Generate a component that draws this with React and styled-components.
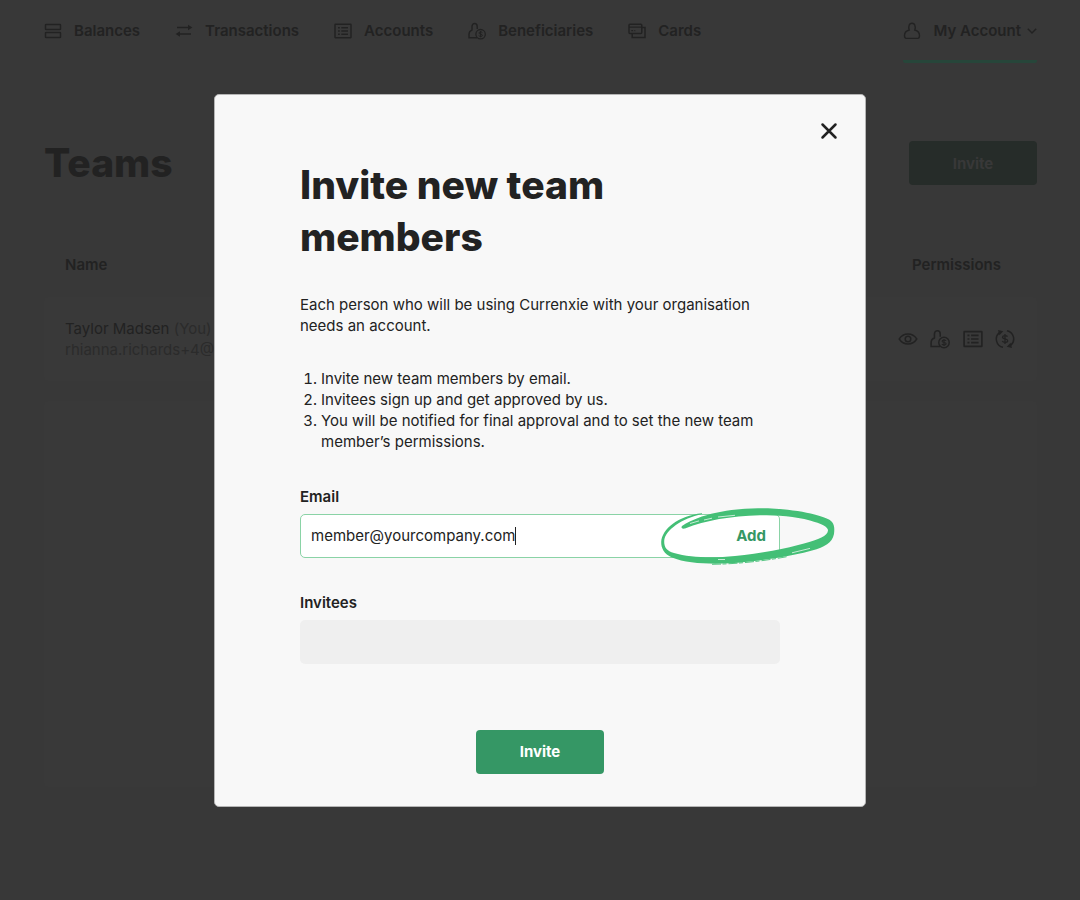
import React, { Component } from 'react'
import styled, { createGlobalStyle } from 'styled-components'

const GlobalStyle = createGlobalStyle`
  * {
    box-sizing: border-box;
  }
  body {
    margin: 0;
    background: #383838;
    color: #222;
    font-family: Inter, "Liberation Sans", sans-serif;
    font-size: 15px;
    line-height: 21px;
  }
  button, input {
    font: inherit;
    color: inherit;
  }
`
const Page = styled.div`
  min-height: 100vh;
  padding: 0 43px 0 44px;
`
const Nav = styled.nav`
  display: flex;
  justify-content: space-between;
  height: 63px;
`
const NavList = styled.div`
  display: flex;
  gap: 35px;
`
const NavLink = styled.a`
  display: flex;
  align-items: center;
  gap: ${(props) => (props.$active ? '6px' : '12px')};
  height: 63px;
  padding-top: 1px;
  border-bottom: 3px solid ${(props) => (props.$active ? '#27463a' : 'transparent')};
  border-radius: 2px;
  color: #222;
  font-weight: 600;
  text-decoration: none;
`
const AccountName = styled.span`
  margin-left: 6px;
`
const Icon = styled.svg`
  width: ${(props) => props.$size || 18}px;
  height: ${(props) => props.$size || 18}px;
  flex: none;
  fill: none;
  stroke: currentColor;
  stroke-width: 1.5;
`
const Header = styled.header`
  display: flex;
  justify-content: space-between;
  align-items: center;
  margin-top: 74px;
`
const Title = styled.h1`
  margin: 0;
  font-size: 39px;
  font-weight: 800;
  line-height: 52px;
`
const Button = styled.button`
  width: 128px;
  height: 44px;
  border: 0;
  border-radius: 4px;
  background: ${(props) => (props.$dimmed ? '#262c29' : '#359765')};
  color: ${(props) => (props.$dimmed ? '#383838' : '#fff')};
  font-weight: 700;
  cursor: pointer;
`
const Table = styled.table`
  width: 100%;
  margin-top: 65px;
  border-spacing: 0;
`
const Th = styled.th`
  padding: 0 22px 22px 21px;
  font-weight: 600;
  text-align: ${(props) => props.$align || 'left'};
`
const Td = styled.td`
  height: 84px;
  padding: 0 22px 0 21px;
  background: #393939;
  &:first-child {
    border-radius: 4px 0 0 4px;
  }
  &:last-child {
    width: 160px;
    border-radius: 0 4px 4px 0;
  }
`
const Muted = styled.span`
  color: #2b2b2b;
`
const Permissions = styled.div`
  display: flex;
  justify-content: space-between;
`
const Panel = styled.section`
  height: 386px;
  margin-top: 20px;
  border-radius: 4px;
  background: #393939;
`
const Overlay = styled.div`
  position: fixed;
  inset: 0;
  display: flex;
  align-items: center;
  justify-content: center;
`
const Modal = styled.div`
  position: relative;
  width: 100%;
  max-width: 652px;
  padding: 64px 85px 32px;
  border: 1px solid #b5b5b5;
  border-radius: 5px;
  background: #f8f8f8;
`
const Close = styled.button`
  position: absolute;
  top: 23px;
  right: 23px;
  display: flex;
  padding: 0;
  border: 0;
  background: none;
  cursor: pointer;
`
const ModalTitle = styled.h2`
  margin: 0 0 31px;
  font-size: 39px;
  font-weight: 800;
  line-height: 52px;
`
const Text = styled.p`
  margin: 0 0 32px;
`
const Steps = styled.ol`
  margin: 0 0 34px;
  padding-left: 21px;
`
const Field = styled.div`
  display: flex;
  flex-direction: column;
  gap: 7px;
  margin-bottom: ${(props) => props.$space};
`
const Label = styled.label`
  font-weight: 600;
`
const InputBox = styled.div`
  position: relative;
  display: flex;
  align-items: center;
  height: 44px;
  padding: 0 13px 0 10px;
  border: 1px solid #8ad3a6;
  border-radius: 5px;
  background: #fff;
`
const Input = styled.input`
  field-sizing: content;
  min-width: 20px;
  padding: 0;
  border: 0;
  outline: 0;
  background: none;
`
const Caret = styled.span`
  width: 1px;
  height: 18px;
  background: #222;
`
const Add = styled.button`
  margin-left: auto;
  padding: 0;
  border: 0;
  background: none;
  color: #359765;
  font-weight: 700;
  cursor: pointer;
`
const Invitees = styled.output`
  height: 44px;
  border-radius: 5px;
  background: #efefef;
`
const Actions = styled.div`
  display: flex;
  justify-content: center;
`
const Scribble = styled.svg`
  position: absolute;
  top: -11px;
  right: -57px;
  width: 176px;
  height: 64px;
  pointer-events: none;
`

const BalancesIcon = () => (
  <Icon viewBox="0 0 18 18">
    <rect x="1.5" y="2.5" width="15" height="5" rx=".6" />
    <rect x="1.5" y="10.5" width="15" height="5" rx=".6" />
  </Icon>
)
const TransactionsIcon = () => (
  <Icon viewBox="0 0 18 18">
    <path d="M2 5.500h12M4 12h12" />
    <path d="M13 2.800l4.400 2.700L13 8.200zM5 9.300L.6 12 5 14.700z" fill="currentColor" stroke="none" />
  </Icon>
)
const ListIcon = ({ size }) => (
  <Icon $size={size} viewBox="0 0 18 18">
    <rect x="1" y="2.300" width="16" height="13.400" rx=".4" />
    <path d="M4 5.700h1.800M4 9h1.800M4 12.300h1.800M7.300 5.700H14M7.300 9H14M7.300 12.300H14" />
  </Icon>
)
const BeneficiaryIcon = ({ size }) => (
  <Icon $size={size} viewBox="0 0 18 18">
    <path d="M9 15.800H1V12.300c0-2.100.8-3.400 3-4.200V4.400C4 .6 9.200.6 9.200 4.400V7" strokeWidth="1.400" />
    <circle cx="12.600" cy="12.200" r="4.700" strokeWidth="1.300" />
    <path d="M14.400 10.600c-.6-1-3.500-1-3.500.4 0 1.500 3.600.8 3.600 2.300 0 1.400-3 1.400-3.800.3M12.600 9v6.400" strokeWidth="1" />
  </Icon>
)
const CardsIcon = () => (
  <Icon viewBox="0 0 18 18">
    <rect x="1" y="2.200" width="12.800" height="9.400" rx="1" strokeWidth="1.500" />
    <path d="M1 5.200h12.800M3.300 8.700h1.800M6.300 8.700h1" strokeWidth="1.300" />
    <path d="M14 5.400h3v10H4.200v-3.600" strokeWidth="1.500" />
  </Icon>
)
const UserIcon = () => (
  <Icon $size={18} viewBox="0 0 18 18">
    <path d="M6.200 8C5.700 6.500 5.600 5 6 3.700 6.800.5 11.200.5 12 3.700c.4 1.300.3 2.800-.2 4.300 3.300 1 4.700 2.900 4.700 5.600 0 1.900-.6 2.800-1.700 2.800H3.200c-1.100 0-1.700-.9-1.700-2.800C1.500 10.900 2.900 9 6.200 8z" strokeWidth="1.400" />
  </Icon>
)
const ChevronIcon = () => (
  <Icon $size={10} viewBox="0 0 10 10">
    <path d="M.8 2.800L5 7l4.200-4.200" />
  </Icon>
)
const EyeIcon = ({ size }) => (
  <Icon $size={size} viewBox="0 0 20 20">
    <path d="M1.200 10C5.500 3.400 14.500 3.400 18.800 10 14.500 16.600 5.500 16.600 1.200 10z" strokeWidth="1.400" />
    <circle cx="10" cy="10" r="2.800" />
  </Icon>
)
const ExchangeIcon = ({ size }) => (
  <Icon $size={size} viewBox="0 0 20 20">
    <path d="M8 18.300A8.400 8.400 0 0 1 4.400 3.600M12 1.700a8.400 8.400 0 0 1 3.600 14.700" />
    <path d="M3 .9l5.300 1.300-3.900 4zM17 19.100l-5.300-1.300 3.900-4z" fill="currentColor" stroke="none" />
    <path d="M12.500 7.600c-.8-1.500-5-1.400-5 .6 0 2.300 5.200 1.100 5.200 3.500 0 2.100-4.300 2.200-5.400.5M10 5v10" strokeWidth="1.300" />
  </Icon>
)
const CloseIcon = () => (
  <Icon $size={26} viewBox="0 0 26 26">
    <path d="M6.500 6.500l13 13M19.500 6.500l-13 13" strokeWidth="2.500" strokeLinecap="round" />
  </Icon>
)
const AddScribble = () => (
  <Scribble viewBox="660 504 176 64" aria-hidden="true">
    <path
      fill="#44bf76"
      d="M682 526C700 514 730 508.500 758 508.300C790 508 818 514 829 519.500C834 522.500 835 527 834 534C832 543 825 547 812 550.500C790 556.500 765 560 745 562C722 564.500 690 565 672 557.500C664 554 661 548 661.200 542C662 529 678 516 702 513.300L702 514C682 518.500 665 530 664.200 541C664 547.500 667 551 674 553C690 557.500 712 558.500 735 556C760 553.500 787 548.500 804 543.500C819 539.500 827.500 536 828 530.500C828.500 527 821 523.500 810 520.500C795 516.500 778 515.300 760 515.300C730 516 706 520.500 685 528.500C682.500 529 680.500 528 682 526z"
    />
    <path d="M690 523.500l9-2.600M704 520l8-1.800M718 517l17-1.700M718 559.500h7M792 552.800l18-4.400" stroke="#fff" strokeWidth=".7" fill="none" />
    <path d="M712 564.300C738 564 764 561 788 556.500" stroke="#44bf76" strokeWidth=".9" strokeDasharray="9 1.500 4 2" fill="none" />
  </Scribble>
)

const links = [
  { name: 'Balances', icon: BalancesIcon },
  { name: 'Transactions', icon: TransactionsIcon },
  { name: 'Accounts', icon: ListIcon },
  { name: 'Beneficiaries', icon: BeneficiaryIcon },
  { name: 'Cards', icon: CardsIcon },
]

export default class App extends Component {
  state = {
    email: 'member@yourcompany.com',
  }

  handleChange = (e) => {
    this.setState({ email: e.target.value })
  }

  render() {
    return (
      <>
        <GlobalStyle />
        <Page>
          <Nav>
            <NavList>
              {links.map(({ name, icon: LinkIcon }) => (
                <NavLink href="#" key={name}>
                  <LinkIcon />
                  {name}
                </NavLink>
              ))}
            </NavList>
            <NavLink href="#" $active>
              <UserIcon />
              <AccountName>My Account</AccountName>
              <ChevronIcon />
            </NavLink>
          </Nav>
          <Header>
            <Title>Teams</Title>
            <Button type="button" $dimmed>Invite</Button>
          </Header>
          <Table>
            <thead>
              <tr>
                <Th>Name</Th>
                <Th $align="center">Permissions</Th>
              </tr>
            </thead>
            <tbody>
              <tr>
                <Td>
                  Taylor Madsen <Muted>(You)</Muted>
                  <br />
                  <Muted>rhianna.richards+4@</Muted>
                </Td>
                <Td>
                  <Permissions>
                    <EyeIcon size={20} />
                    <BeneficiaryIcon size={20} />
                    <ListIcon size={20} />
                    <ExchangeIcon size={20} />
                  </Permissions>
                </Td>
              </tr>
            </tbody>
          </Table>
          <Panel />
        </Page>

        <Overlay>
          <Modal role="dialog" aria-modal="true" aria-labelledby="invite-title">
            <Close type="button" aria-label="Close">
              <CloseIcon />
            </Close>
            <ModalTitle id="invite-title">Invite new team members</ModalTitle>
            <Text>Each person who will be using Currenxie with your organisation needs an account.</Text>
            <Steps>
              <li>Invite new team members by email.</li>
              <li>Invitees sign up and get approved by us.</li>
              <li>You will be notified for final approval and to set the new team member’s permissions.</li>
            </Steps>
            <Field $space="34px">
              <Label htmlFor="email">Email</Label>
              <InputBox>
                <Input id="email" type="text" value={this.state.email} onChange={this.handleChange} />
                <Caret />
                <Add type="button">Add</Add>
                <AddScribble />
              </InputBox>
            </Field>
            <Field $space="66px">
              <Label htmlFor="invitees">Invitees</Label>
              <Invitees id="invitees" />
            </Field>
            <Actions>
              <Button type="button">Invite</Button>
            </Actions>
          </Modal>
        </Overlay>
      </>
    )
  }
}
